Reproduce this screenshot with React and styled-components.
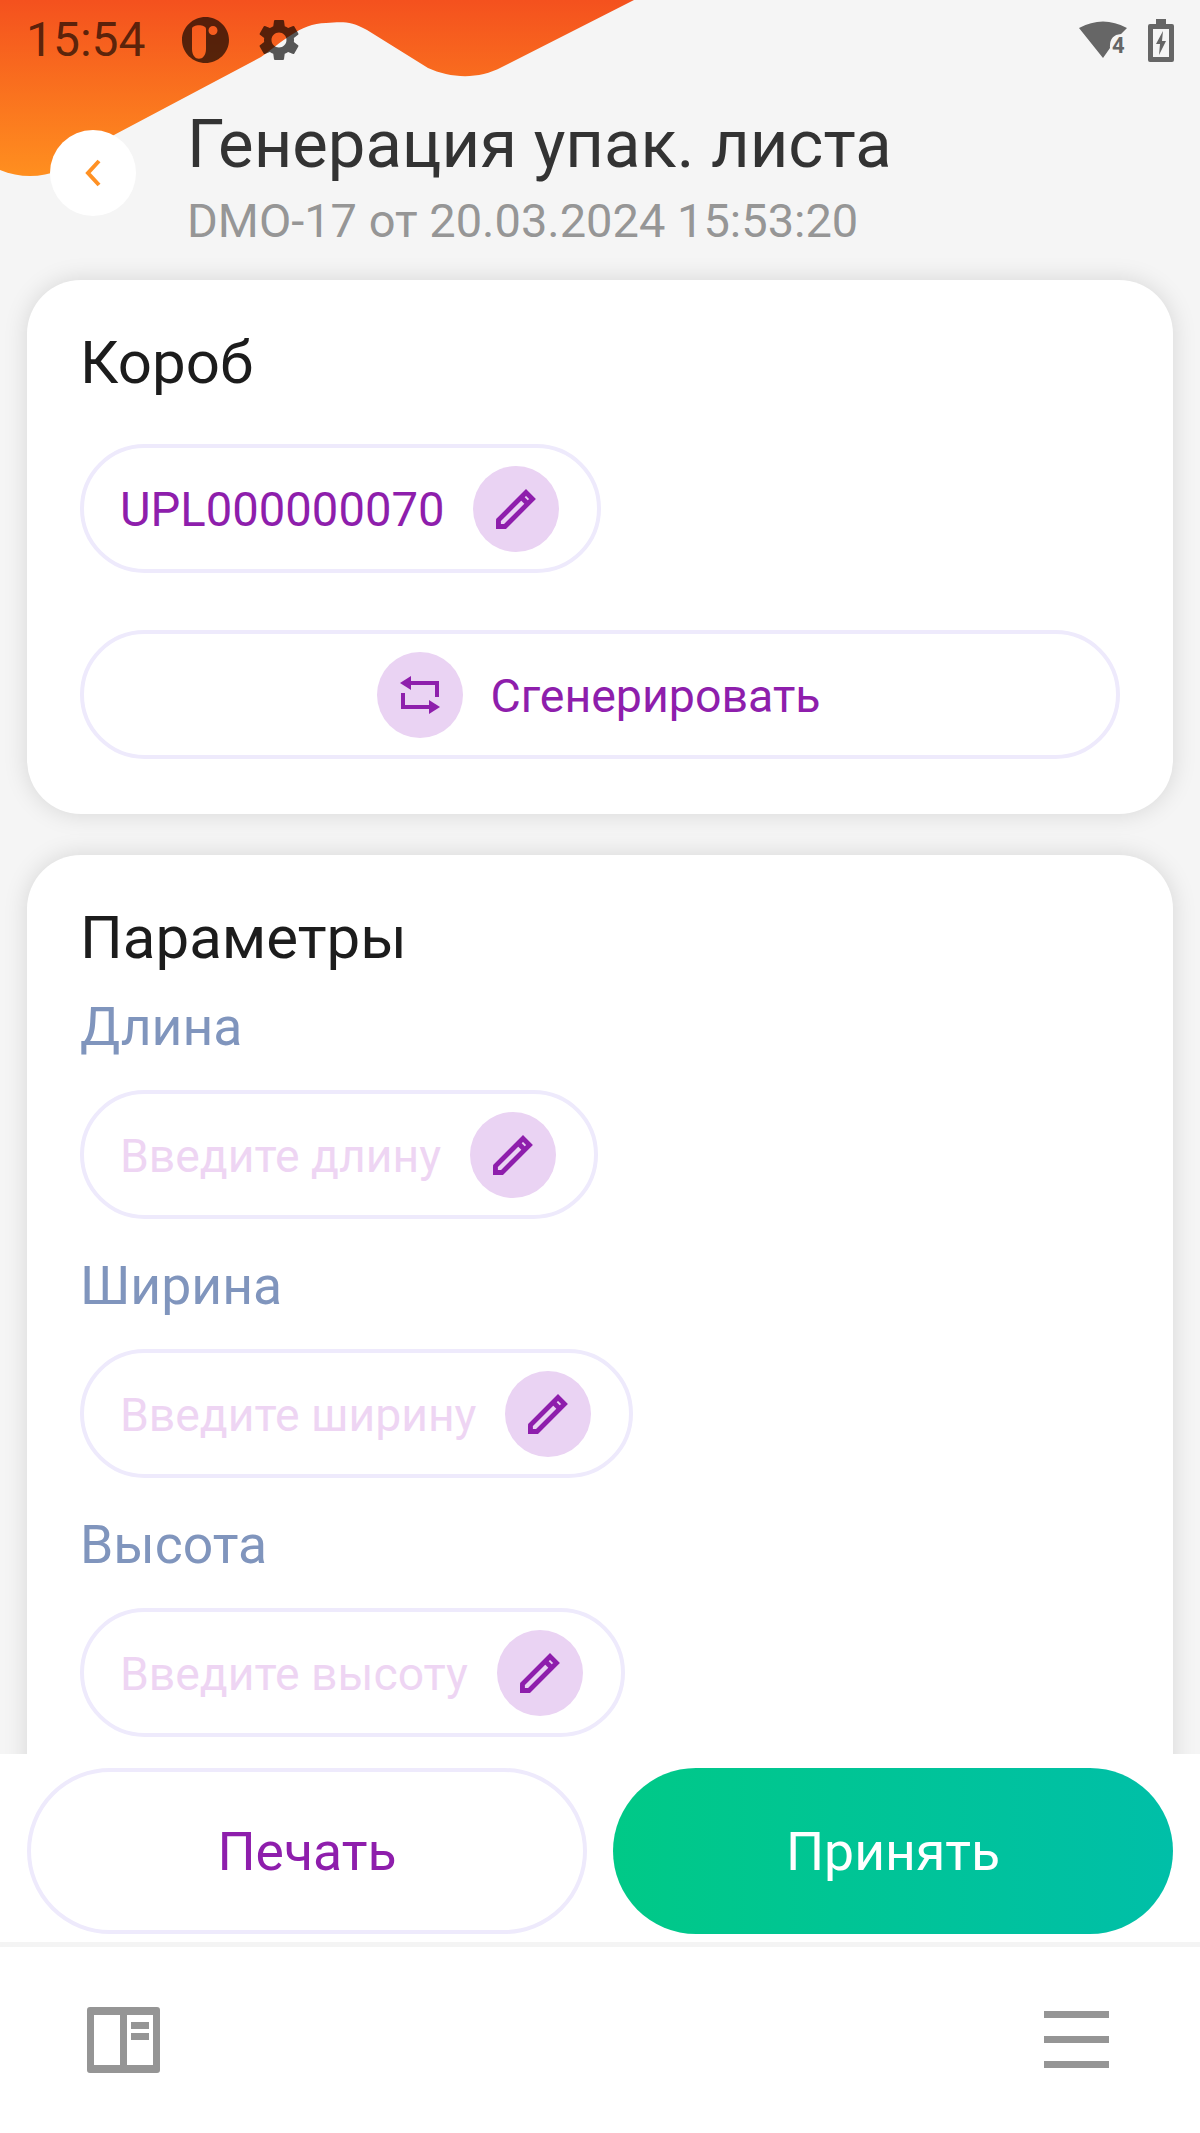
import React from "react";
import styled, { createGlobalStyle } from "styled-components";
import { MdSettings } from "react-icons/md";

const GlobalStyle = createGlobalStyle`
  html, body {
    margin: 0;
    padding: 0;
    background: #f5f5f5;
  }
  * {
    box-sizing: border-box;
  }
`;

const Purple = "#8e1eac";
const StatusGrey = "rgba(0, 0, 0, 0.65)";

// page frame
const Page = styled.div`
  position: relative;
  width: 1200px;
  height: 2133px;
  display: flex;
  flex-direction: column;
  overflow: hidden;
  background: #f5f5f5;
  font-family: Roboto, "Noto Sans", sans-serif;
`;
const Wave = styled.svg`
  position: absolute;
  top: 0;
  left: 0;
`;
const Content = styled.div`
  position: relative;
  flex: 1;
  min-height: 0;
  overflow: hidden;
  display: flex;
  flex-direction: column;
`;

// status bar
const StatusBar = styled.div`
  flex-shrink: 0;
  height: 80px;
  padding: 0 26px 0 26px;
  display: flex;
  align-items: center;
  color: ${StatusGrey};
`;
const Time = styled.span`
  font-size: 48px;
  line-height: 80px;
  margin-right: 36px;
`;
const AppIcon = styled.svg`
  margin-right: 25px;
`;
const StatusRight = styled.div`
  margin-left: auto;
  display: flex;
  align-items: center;
  gap: 21px;
`;

// header
const Header = styled.div`
  flex-shrink: 0;
  height: 200px;
  padding-left: 50px;
  display: flex;
  align-items: flex-start;
`;
const BackButton = styled.div`
  width: 86px;
  height: 86px;
  margin-top: 50px;
  margin-right: 51px;
  border-radius: 50%;
  background: #fff;
  display: flex;
  align-items: center;
  justify-content: center;
`;
const TitleBox = styled.div`
  display: flex;
  flex-direction: column;
`;
const Title = styled.div`
  font-size: 67px;
  line-height: 80px;
  margin-top: 24px;
  color: #333;
`;
const Subtitle = styled.div`
  font-size: 47px;
  line-height: 56px;
  margin-top: 9px;
  color: #969696;
`;

// cards
const Card = styled.div`
  flex-shrink: 0;
  margin: 0 27px 41px;
  padding: 49px 53px 55px;
  background: #fff;
  border-radius: 54px;
  box-shadow: 0 0 24px rgba(0, 0, 0, 0.13);
  display: flex;
  flex-direction: column;
  align-items: flex-start;
`;
const CardTitle = styled.div`
  font-size: 60px;
  line-height: 68px;
  color: #1c1c1c;
  margin-bottom: ${(p) => p.$gap}px;
`;
const FieldLabel = styled.div`
  font-size: 53.5px;
  line-height: 60px;
  color: #8095bd;
  margin-bottom: 33px;
`;
const Pill = styled.div`
  height: 129px;
  padding: 0 38px 0 36px;
  border: 4px solid #eeeafc;
  border-radius: 65px;
  background: #fff;
  display: inline-flex;
  align-items: center;
  gap: 28.5px;
  font-size: ${(p) => p.$size}px;
  color: ${(p) => (p.$empty ? "#eed5f3" : Purple)};
  margin-bottom: ${(p) => p.$after}px;
`;
const PillText = styled.span`
  padding-top: 3px;
`;
const WidePill = styled(Pill)`
  width: 100%;
  justify-content: center;
  gap: 27px;
  margin-bottom: 0;
`;
const IconCircle = styled.div`
  width: 86px;
  height: 86px;
  border-radius: 50%;
  background: #ead3f3;
  display: flex;
  align-items: center;
  justify-content: center;
`;

// footer buttons
const Footer = styled.div`
  position: relative;
  flex-shrink: 0;
  height: 188px;
  padding: 14px 27px 0;
  background: #fff;
  display: grid;
  grid-template-columns: 560px 560px;
  column-gap: 26px;
  align-items: start;
`;
const ActionButton = styled.div`
  height: 166px;
  border-radius: 83px;
  display: flex;
  align-items: center;
  justify-content: center;
  font-size: 53.5px;
  color: ${(p) => (p.$primary ? "#fff" : Purple)};
  border: ${(p) => (p.$primary ? "none" : "4px solid #eeeafc")};
  background: ${(p) =>
    p.$primary ? "linear-gradient(90deg, #00c987 0%, #00bfa8 100%)" : "#fff"};
`;

// bottom nav
const BottomNav = styled.div`
  position: relative;
  flex-shrink: 0;
  height: 191px;
  border-top: 5px solid #f4f4f4;
  padding: 60px 91px 0 87px;
  background: #fff;
  display: flex;
  justify-content: space-between;
  align-items: flex-start;
`;
const Burger = styled.div`
  width: 65px;
  margin-top: 4px;
  display: flex;
  flex-direction: column;
  gap: 18px;
`;
const BurgerLine = styled.div`
  height: 7px;
  background: #959595;
`;

function PencilIcon() {
  return (
    <svg width="40" height="40" viewBox="0 0 40 40">
      <path d="M2.5 37.5 V31 L30 3.5 L36.5 10 L9 37.5 Z" fill="none" stroke={Purple} strokeWidth="4.8" />
      <path d="M25 8 L32 15" stroke={Purple} strokeWidth="4.8" />
      <path d="M0 40 V31 L9 40 Z" fill={Purple} />
    </svg>
  );
}

function SwapIcon() {
  return (
    <svg width="40" height="40" viewBox="0 0 40 40">
      <path d="M10 8 H37 V22" fill="none" stroke={Purple} strokeWidth="4" />
      <path d="M0 8 L11 1 V15 Z" fill={Purple} />
      <path d="M3 18 V32 H30" fill="none" stroke={Purple} strokeWidth="4" />
      <path d="M40 32 L29 25 V39 Z" fill={Purple} />
    </svg>
  );
}

function Field({ label, placeholder }) {
  return (
    <>
      <FieldLabel>{label}</FieldLabel>
      <Pill $empty $after={37} $size={46.3}>
        <PillText>{placeholder}</PillText>
        <IconCircle>
          <PencilIcon />
        </IconCircle>
      </Pill>
    </>
  );
}

function App() {
  return (
    <Page>
      <GlobalStyle />
      <Wave width="640" height="180" viewBox="0 0 640 180">
        <defs>
          <linearGradient id="waveFill" x1="0" y1="0" x2="0" y2="1">
            <stop offset="0" stopColor="#f4511e" />
            <stop offset="1" stopColor="#ff8f1f" />
          </linearGradient>
        </defs>
        <path
          d="M0 0 H634 L502 67 C478 80 450 78 428 68 L367 30 C350 20 340 22 326 23 C300 23 280 44 261 57 L114 135 L60 170 C40 178 20 178 0 170 Z"
          fill="url(#waveFill)"
        />
      </Wave>
      <Content>
        <StatusBar>
          <Time>15:54</Time>
          <AppIcon width="47" height="46" viewBox="0 0 47 46">
            <path
              fillRule="evenodd"
              d="M23.5 0 C36 0 47 10 47 23 C47 36 36 46 23.5 46 C11 46 0 36 0 23 C0 10 11 0 23.5 0 Z M10 12 V32 C10 45 24 45 24 32 V12 C24 7 10 7 10 12 Z M31 9 A4.5 4.5 0 1 0 31 18 A4.5 4.5 0 1 0 31 9 Z"
              fill="rgba(0, 0, 0, 0.65)"
            />
          </AppIcon>
          <MdSettings size={50} color={StatusGrey} />
          <StatusRight>
            <svg width="48" height="40" viewBox="0 0 48 40">
              <path d="M0 8 Q24 -5 48 8 L42 14 Q30 15 31 28 L24 38 Z" fill="#666" />
              <text x="33" y="33" fontFamily="Roboto, sans-serif" fontWeight="700" fontSize="22" fill="#666">
                4
              </text>
            </svg>
            <svg width="26" height="43" viewBox="0 0 26 43">
              <path d="M8 0 H18 V5 H24 Q26 5 26 7 V41 Q26 43 24 43 H2 Q0 43 0 41 V7 Q0 5 2 5 H8 Z" fill="#666" />
              <rect x="5" y="10" width="16" height="28" fill="#f5f5f5" />
              <path d="M15 12 L8 25 H12 L11 36 L18 22 H14 Z" fill="#666" />
            </svg>
          </StatusRight>
        </StatusBar>
        <Header>
          <BackButton>
            <svg width="16" height="28" viewBox="0 0 16 28">
              <path d="M14 2 L3 14 L14 26" fill="none" stroke="#ff9124" strokeWidth="4" />
            </svg>
          </BackButton>
          <TitleBox>
            <Title>Генерация упак. листа</Title>
            <Subtitle>DMO-17 от 20.03.2024 15:53:20</Subtitle>
          </TitleBox>
        </Header>
        <Card>
          <CardTitle $gap={47}>Короб</CardTitle>
          <Pill $after={57} $size={47.2}>
            <PillText>UPL000000070</PillText>
            <IconCircle>
              <PencilIcon />
            </IconCircle>
          </Pill>
          <WidePill $size={46.5}>
            <IconCircle>
              <SwapIcon />
            </IconCircle>
            <PillText>Сгенерировать</PillText>
          </WidePill>
        </Card>
        <Card>
          <CardTitle $gap={25}>Параметры</CardTitle>
          <Field label="Длина" placeholder="Введите длину" />
          <Field label="Ширина" placeholder="Введите ширину" />
          <Field label="Высота" placeholder="Введите высоту" />
        </Card>
      </Content>
      <Footer>
        <ActionButton>Печать</ActionButton>
        <ActionButton $primary>Принять</ActionButton>
      </Footer>
      <BottomNav>
        <svg width="73" height="66" viewBox="0 0 73 66">
          <path
            fillRule="evenodd"
            d="M3 0 H70 Q73 0 73 3 V63 Q73 66 70 66 H3 Q0 66 0 63 V3 Q0 0 3 0 Z M7 8 V58 H33 V8 Z M40 8 V58 H66 V8 Z"
            fill="#959595"
          />
          <rect x="44" y="15" width="18" height="7" fill="#959595" />
          <rect x="44" y="26" width="18" height="7" fill="#959595" />
        </svg>
        <Burger>
          <BurgerLine />
          <BurgerLine />
          <BurgerLine />
        </Burger>
      </BottomNav>
    </Page>
  );
}

export default App;
